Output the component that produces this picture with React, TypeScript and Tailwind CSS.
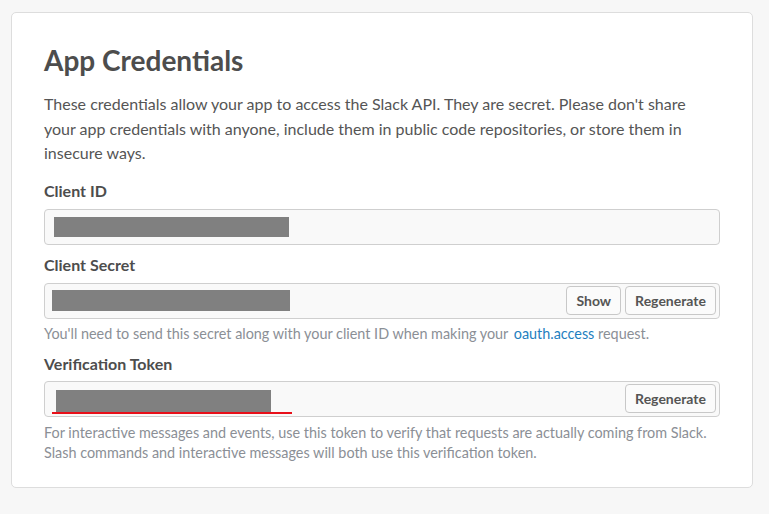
export default function App() {
  return (
    <main className="min-h-screen bg-[#f7f7f7] px-[11px] pt-[12px] pb-[26px] font-['Lato','Liberation_Sans',sans-serif]">
      <div className="w-[742px] rounded-[5px] border border-[#dddddd] bg-white px-[32px] pt-[29px] pb-[24px]">
        <h1 className="text-[28px] leading-[36px] font-bold text-[#4d4d4d]">App Credentials</h1>
        <p className="mt-[14px] text-[16px] leading-[24.5px] text-[#555555]">
          These credentials allow your app to access the Slack API. They are secret. Please don't share your app
          credentials with anyone, include them in public code repositories, or store them in insecure ways.
        </p>

        {/* client id */}
        <h3 className="mt-[14px] text-[16px] leading-[22px] font-bold text-[#4d4d4d]">Client ID</h3>
        <div className="mt-[7px] flex h-[36px] items-center rounded-[4px] border border-[#cfcfcf] bg-[#f9f9f9] pl-[9px]">
          <div className="h-[20px] w-[235px] bg-[#808080]" />
        </div>

        {/* client secret */}
        <h3 className="mt-[9px] text-[16px] leading-[22px] font-bold text-[#4d4d4d]">Client Secret</h3>
        <div className="mt-[7px] flex h-[36px] items-center justify-between rounded-[4px] border border-[#cfcfcf] bg-[#f9f9f9] pr-[3px] pl-[7px]">
          <div className="h-[21px] w-[238px] bg-[#808080]" />
          <div className="flex gap-[4px]">
            <button className="h-[29px] rounded-[4px] border border-[#c8c8c8] bg-[#fbfbfb] px-[9px] text-[14px] font-bold text-[#555555]">
              Show
            </button>
            <button className="h-[29px] rounded-[4px] border border-[#c8c8c8] bg-[#fbfbfb] px-[9px] text-[14px] font-bold text-[#555555]">
              Regenerate
            </button>
          </div>
        </div>
        <p className="mt-[5px] text-[14.4px] leading-[20px] text-[#8b8f96]">
          You'll need to send this secret along with your client ID when making your{" "}
          <a className="ml-[2px] text-[#1f7fc0]">oauth.access</a> request.
        </p>

        {/* verification token */}
        <h3 className="mt-[9px] text-[16px] leading-[22px] font-bold text-[#4d4d4d]">Verification Token</h3>
        <div className="mt-[6px] flex h-[36px] items-center justify-between rounded-[4px] border border-[#cfcfcf] bg-[#f9f9f9] pr-[3px] pl-[7px]">
          <div className="relative mt-[6px] pl-[4px]">
            <div className="h-[22px] w-[215px] bg-[#808080]" />
            <div className="h-[2px] w-[240px] -ml-[4px] bg-[#e8101a]" />
          </div>
          <button className="h-[29px] rounded-[4px] border border-[#c8c8c8] bg-[#fbfbfb] px-[9px] text-[14px] font-bold text-[#555555]">
            Regenerate
          </button>
        </div>
        <p className="mt-[6px] text-[14.4px] leading-[20px] text-[#8b8f96]">
          For interactive messages and events, use this token to verify that requests are actually coming from Slack.
          Slash commands and interactive messages will both use this verification token.
        </p>
      </div>
    </main>
  );
}
